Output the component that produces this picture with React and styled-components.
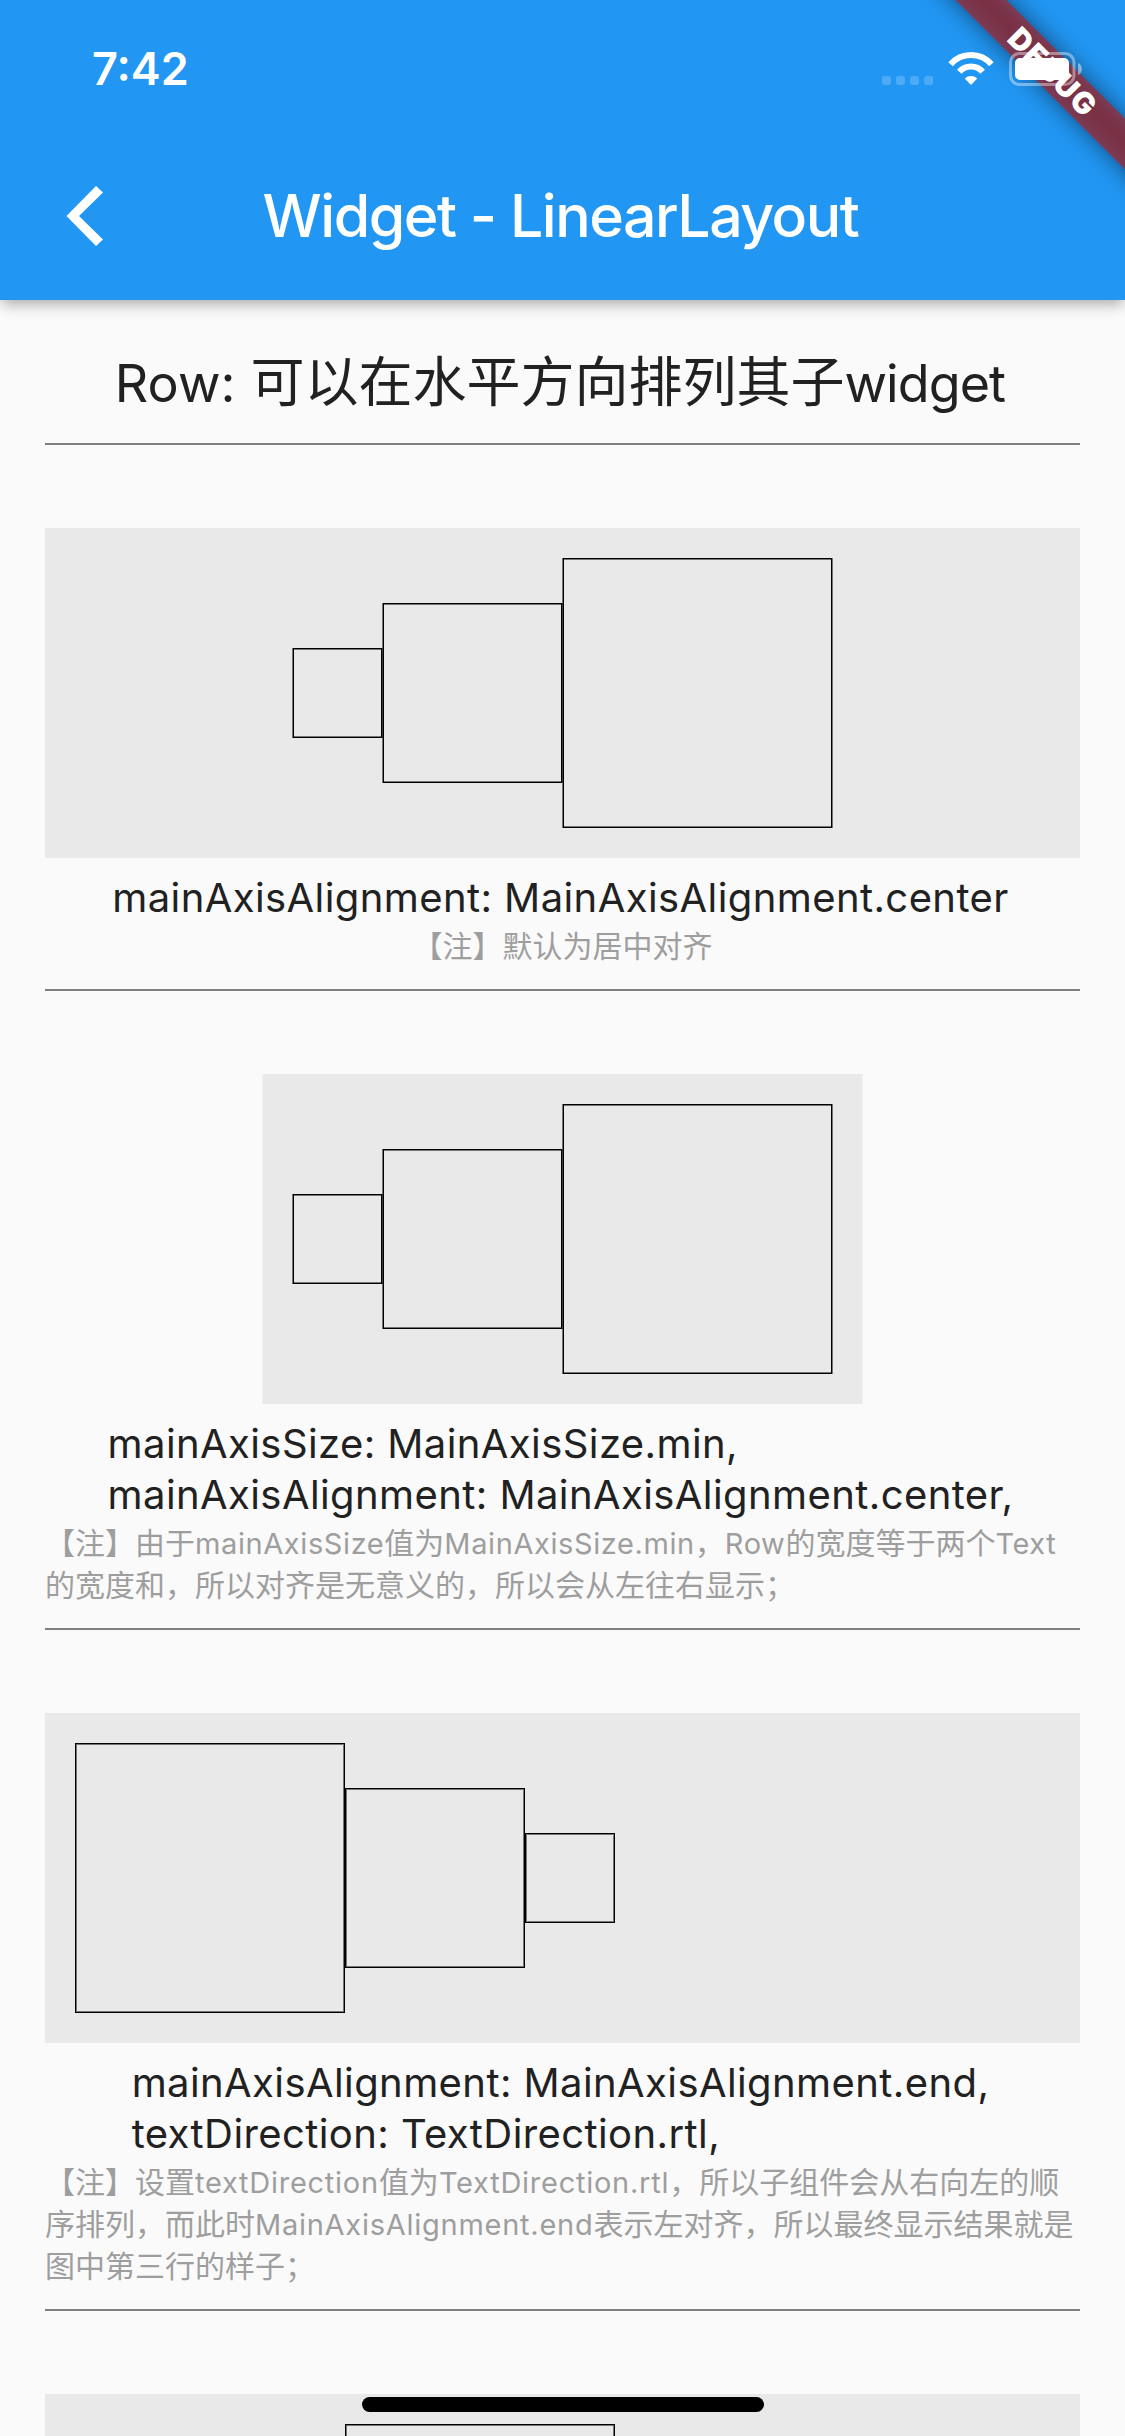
import React from 'react';
import styled, { createGlobalStyle, css } from 'styled-components';

const latin = `Inter, "Liberation Sans", sans-serif`;
const cjk = `"Noto Sans CJK SC", sans-serif`;

const GlobalStyle = createGlobalStyle`
  *, *::before, *::after { box-sizing: border-box; }
  body { margin: 0; background: #fafafa; }
`;

const Screen = styled.div`
  position: relative;
  width: 1125px;
  height: 2436px;
  overflow: hidden;
  background: #fafafa;
  color: #212121;
  font-family: ${latin};
`;

const AppBar = styled.header`
  position: relative;
  height: 300px;
  background: #2196f3;
  color: #fff;
  box-shadow: 0 6px 12px -3px rgba(0, 0, 0, 0.2), 0 6px 15px rgba(0, 0, 0, 0.09),
    0 3px 18px rgba(0, 0, 0, 0.07);
`;

const StatusBar = styled.div`
  position: relative;
  z-index: 2;
  display: flex;
  justify-content: space-between;
  align-items: flex-start;
  height: 132px;
  padding: 0 42px 0 92px;
`;

const Clock = styled.span`
  margin-top: 42px;
  font-size: 45px;
  font-weight: 600;
  line-height: 54px;
`;

const StatusIcons = styled.div`
  display: flex;
  align-items: flex-end;
  gap: 15px;
  height: 86px;
`;

const Signal = styled.div`
  display: flex;
  gap: 5px;
  margin-bottom: 1px;
`;

const SignalDot = styled.span`
  width: 9px;
  height: 9px;
  border-radius: 2.5px;
  background: rgba(255, 255, 255, 0.2);
`;

const WifiIcon = styled.svg`
  display: block;
  margin-bottom: 1px;
`;

const BatteryIcon = styled.svg`
  display: block;
`;

const Toolbar = styled.div`
  display: grid;
  grid-template-columns: 168px 1fr 168px;
  align-items: center;
  height: 168px;
`;

const BackButton = styled.button`
  display: flex;
  align-items: center;
  height: 168px;
  padding: 0 0 0 66px;
  border: 0;
  background: none;
`;

const Title = styled.h1`
  margin: 0;
  padding-right: 4px;
  font-size: 59px;
  font-weight: 500;
  line-height: 72px;
  letter-spacing: -1.47px;
  text-align: center;
  white-space: nowrap;
`;

const BannerCorner = styled.div`
  position: absolute;
  z-index: 1;
  top: 0;
  right: 0;
  width: 260px;
  height: 260px;
  overflow: hidden;
`;

const ribbon = css`
  position: absolute;
  left: 8.25px;
  top: 53.75px;
  width: 360px;
  height: 36px;
  transform: rotate(45deg);
`;

const BannerShadow = styled.div`
  ${ribbon}
  background: rgba(0, 0, 0, 0.5);
  filter: blur(12px);
`;

const BannerRibbon = styled.div`
  ${ribbon}
  background: rgba(183, 28, 28, 0.627);
  color: #fff;
  font-size: 30px;
  font-weight: 900;
  line-height: 36px;
  letter-spacing: 1.5px;
  text-align: center;
`;

const Content = styled.main`
  display: flex;
  flex-direction: column;
  padding: 43px 45px 0;
`;

const Heading = styled.h2`
  margin: 0;
  padding: 0 5px 28px 0;
  border-bottom: 2px solid #7f7f7f;
  font-family: ${cjk};
  font-size: 54px;
  font-weight: 400;
  line-height: 72px;
  text-align: center;
  white-space: nowrap;
`;

const HeadingLatin = styled.span`
  font-family: ${latin};
  font-size: 52px;
  line-height: 0;
  letter-spacing: ${(p) => p.$spacing}px;
`;

const Section = styled.section`
  display: flex;
  flex-direction: column;
  align-items: center;
  padding: 83px 0 24px;
  border-bottom: 2px solid #7f7f7f;
`;

const Panel = styled.div`
  display: flex;
  flex-shrink: 0;
  flex-direction: ${(p) => (p.$rtl ? 'row-reverse' : 'row')};
  justify-content: ${(p) => p.$justify};
  align-items: center;
  gap: ${(p) => (p.$half ? 1 : 0)}px;
  width: ${(p) => (p.$shrink ? 'auto' : '100%')};
  height: 330px;
  padding: 30px;
  background: #e9e9e9;
  ${(p) =>
    p.$shrink &&
    css`
      box-shadow: -1px 0 #f1f1f1, 1px 0 #f1f1f1;
    `}
`;

const Square = styled.div`
  flex: none;
  width: ${(p) => p.$size - (p.$half ? 1 : 0)}px;
  height: ${(p) => p.$size}px;
  border: 1px solid #000;
  box-shadow: ${(p) =>
    p.$half
      ? `inset 0 1px rgba(0, 0, 0, 0.5), inset 0 -1px rgba(0, 0, 0, 0.5),
         -1px 0 rgba(0, 0, 0, 0.5), 1px 0 rgba(0, 0, 0, 0.5)`
      : 'inset 0 0 0 1px rgba(0, 0, 0, 0.5)'};
`;

const Caption = styled.p`
  margin: 14px 0 0;
  padding-right: 4px;
  font-size: 40px;
  line-height: 51px;
  letter-spacing: 0.41px;
  white-space: pre;
`;

const Note = styled.p`
  margin: 0;
  color: #9e9e9e;
  font-family: ${cjk};
  font-size: 30px;
  line-height: 42px;
  text-spacing-trim: space-all;
`;

const NoteLatin = styled.span`
  font-family: ${latin};
  font-size: 29px;
  line-height: 0;
  letter-spacing: ${(p) => p.$spacing}px;
`;

const HomeIndicator = styled.div`
  position: absolute;
  left: 362px;
  bottom: 24px;
  width: 402px;
  height: 15px;
  border-radius: 7.5px;
  background: #000;
`;

const sections = [
  {
    justify: 'center',
    half: true,
    caption: 'mainAxisAlignment: MainAxisAlignment.center',
    note: '【注】默认为居中对齐',
  },
  {
    justify: 'center',
    half: true,
    shrink: true,
    caption: 'mainAxisSize: MainAxisSize.min,\nmainAxisAlignment: MainAxisAlignment.center,',
    note: '【注】由于mainAxisSize值为MainAxisSize.min，Row的宽度等于两个Text的宽度和，所以对齐是无意义的，所以会从左往右显示；',
    noteSpacing: 0.6,
  },
  {
    justify: 'flex-end',
    rtl: true,
    caption: 'mainAxisAlignment: MainAxisAlignment.end,\ntextDirection: TextDirection.rtl,',
    note: '【注】设置textDirection值为TextDirection.rtl，所以子组件会从右向左的顺序排列，而此时MainAxisAlignment.end表示左对齐，所以最终显示结果就是图中第三行的样子；',
    noteSpacing: 0.74,
  },
  { justify: 'flex-start' },
];

const sizes = [90, 180, 270];

function NoteText({ text, spacing }) {
  return (
    <Note>
      {text.split(/([A-Za-z.]+)/).map((part, i) =>
        i % 2 ? (
          <NoteLatin key={i} $spacing={spacing}>
            {part}
          </NoteLatin>
        ) : (
          part
        )
      )}
    </Note>
  );
}

function DemoSection({ justify, half, shrink, rtl, caption, note, noteSpacing }) {
  return (
    <Section>
      <Panel $justify={justify} $half={half} $shrink={shrink} $rtl={rtl}>
        {sizes.map((size) => (
          <Square key={size} $size={size} $half={half} />
        ))}
      </Panel>
      {caption && <Caption>{caption}</Caption>}
      {note && <NoteText text={note} spacing={noteSpacing} />}
    </Section>
  );
}

export default function App() {
  return (
    <Screen>
      <GlobalStyle />
      <AppBar>
        <StatusBar>
          <Clock>7:42</Clock>
          <StatusIcons>
            <Signal>
              <SignalDot />
              <SignalDot />
              <SignalDot />
              <SignalDot />
            </Signal>
            <WifiIcon width="46" height="34" viewBox="0 0 46 34" fill="none">
              <path d="M2.6 13.3A27 27 0 0 1 43.4 13.3" stroke="#fff" strokeWidth="6" />
              <path d="M11.3 20.8A15.5 15.5 0 0 1 34.7 20.8" stroke="#fff" strokeWidth="6" />
              <path d="M23 34L16.8 27.6A9 9 0 0 1 29.2 27.6Z" fill="#fff" />
            </WifiIcon>
            <BatteryIcon width="74" height="34" viewBox="0 0 74 34" fill="none">
              <rect x="1.5" y="1.5" width="63.5" height="31" rx="9" stroke="#fff" strokeWidth="3" opacity="0.4" />
              <path d="M69 11C74.3 13 74.3 21 69 23Z" fill="#fff" opacity="0.45" />
              <rect x="6" y="6" width="54" height="22" rx="5" fill="#fff" />
            </BatteryIcon>
          </StatusIcons>
        </StatusBar>
        <Toolbar>
          <BackButton aria-label="Back">
            <svg width="37" height="60" viewBox="0 0 37 60">
              <path d="M30 0L37 6.5L13 30L37 53.5L30 60L0.4 30Z" fill="#fff" />
            </svg>
          </BackButton>
          <Title>Widget - LinearLayout</Title>
        </Toolbar>
        <BannerCorner>
          <BannerShadow />
          <BannerRibbon>DEBUG</BannerRibbon>
        </BannerCorner>
      </AppBar>
      <Content>
        <Heading>
          <HeadingLatin $spacing={0.1}>Row: </HeadingLatin>
          可以在水平方向排列其子
          <HeadingLatin $spacing={-0.9}>widget</HeadingLatin>
        </Heading>
        {sections.map((section, i) => (
          <DemoSection key={i} {...section} />
        ))}
      </Content>
      <HomeIndicator />
    </Screen>
  );
}
